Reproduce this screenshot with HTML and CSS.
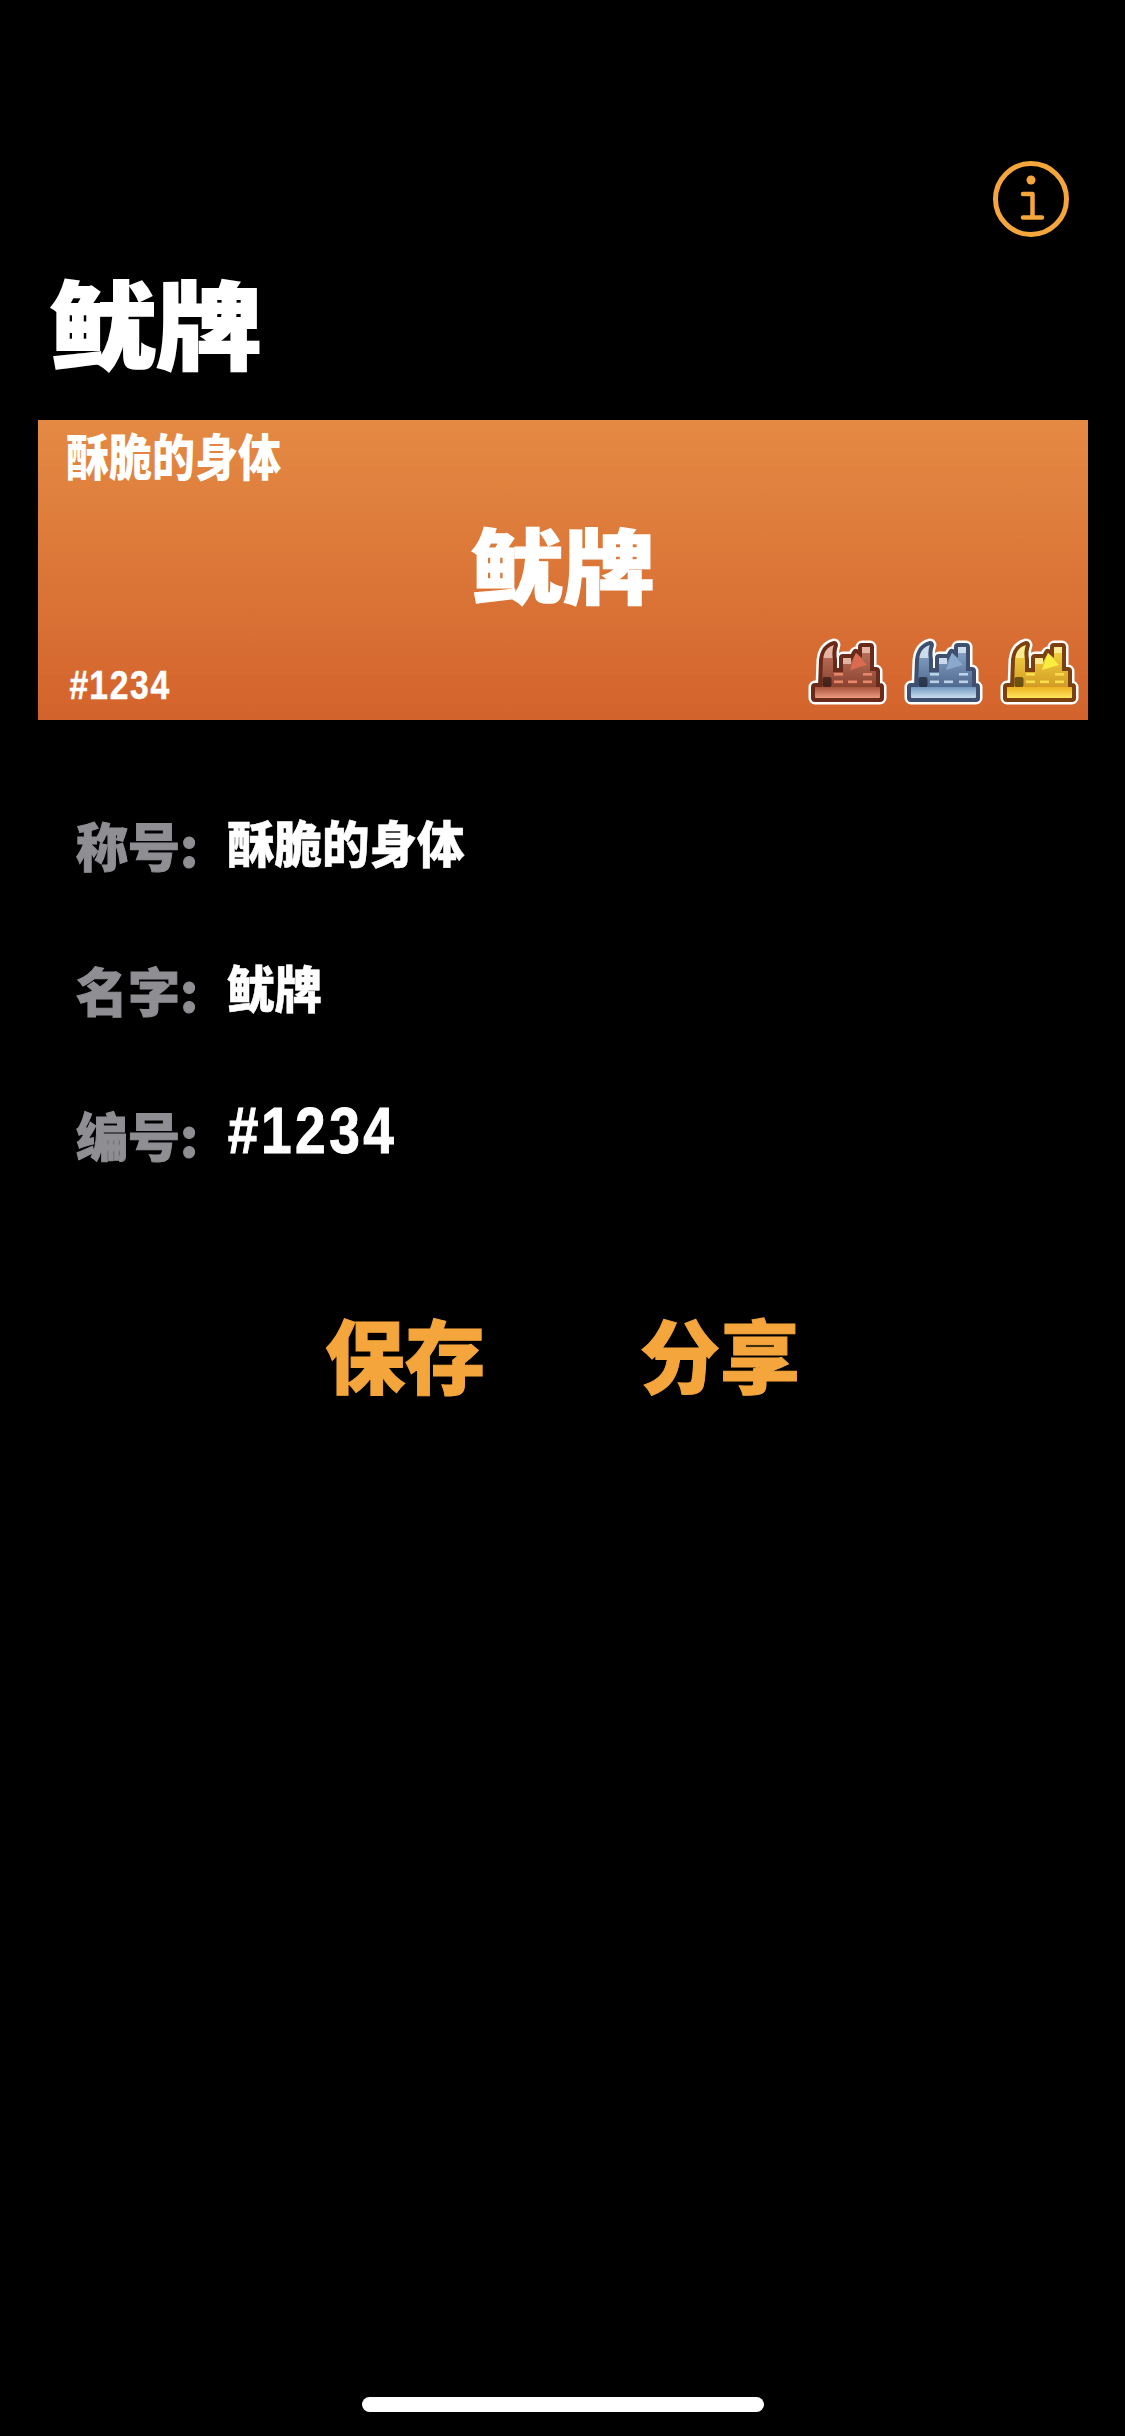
FILE: index.html
```html
<!DOCTYPE html>
<html lang="zh-CN">
<head>
<meta charset="utf-8">
<title>鱿牌</title>
<link rel="stylesheet" href="styles.css">
</head>
<body>
<svg class="defs" width="0" height="0" aria-hidden="true">
  <defs>
    <linearGradient id="bronzeBase" x1="0" y1="0" x2="0" y2="1"><stop offset="0" stop-color="#a9543c"/><stop offset="1" stop-color="#ea9a80"/></linearGradient>
    <linearGradient id="silverBase" x1="0" y1="0" x2="0" y2="1"><stop offset="0" stop-color="#7398bf"/><stop offset="1" stop-color="#c9deef"/></linearGradient>
    <linearGradient id="goldBase" x1="0" y1="0" x2="0" y2="1"><stop offset="0" stop-color="#eeb021"/><stop offset="1" stop-color="#fde65c"/></linearGradient>
    <linearGradient id="bronzeBody" x1="0" y1="0" x2="0" y2="1"><stop offset="0" stop-color="#c27a62"/><stop offset="1" stop-color="#7c3423"/></linearGradient>
    <linearGradient id="silverBody" x1="0" y1="0" x2="0" y2="1"><stop offset="0" stop-color="#8eaccb"/><stop offset="1" stop-color="#3f5880"/></linearGradient>
    <linearGradient id="goldBody" x1="0" y1="0" x2="0" y2="1"><stop offset="0" stop-color="#f7dc45"/><stop offset="1" stop-color="#c98a1c"/></linearGradient>
    <symbol id="factory" viewBox="0 0 80 65" overflow="visible">
      <path class="f-shape f-outer" d="M8 60 V49 H15 L16 22 C17 14 20 9 27 7 C25 12 25 16 26 22 V34 H36 V20 H44 V24 L49 15 L55 20 V9 H63 V33 H69 V49 H73 V60 Z"/>
      <path class="f-shape f-inner" d="M8 60 V49 H15 L16 22 C17 14 20 9 27 7 C25 12 25 16 26 22 V34 H36 V20 H44 V24 L49 15 L55 20 V9 H63 V33 H69 V49 H73 V60 Z"/>
      <path class="f-stack" d="M16.5 20 C17 14 20 9.5 26.5 7.5 C25 12 25 16 25.5 20 Z"/>
      <rect class="f-stack" x="36" y="20" width="8" height="6"/>
      <rect class="f-stack" x="55" y="9" width="8" height="6"/>
      <path class="f-tri" d="M49 15 L60 27 L43 32 Z"/>
      <g class="f-lights">
        <rect x="27" y="35" width="9" height="2.6"/>
        <rect x="56" y="35" width="9" height="2.6"/>
        <rect x="27" y="42.5" width="9" height="2.6"/>
        <rect x="41" y="42.5" width="9" height="2.6"/>
        <rect x="56" y="42.5" width="9" height="2.6"/>
      </g>
      <rect class="f-shadow" x="15.5" y="39" width="9" height="10" rx="2"/>
      <rect class="f-base" x="8" y="49" width="65" height="11" rx="1"/>
    </symbol>
  </defs>
</svg>

<main class="screen">
  <header class="topbar">
    <svg class="info" viewBox="0 0 76 76" aria-label="信息">
      <circle cx="38" cy="38" r="35.5" fill="none" stroke="#f4a63c" stroke-width="5"/>
      <circle cx="38" cy="19" r="4.5" fill="#f4a63c"/>
      <path d="M30 33 H39.5 V56.5 M30 56.5 H49" fill="none" stroke="#f4a63c" stroke-width="4.5" stroke-linecap="round" stroke-linejoin="round"/>
    </svg>
  </header>

  <h1 class="page-title">鱿牌</h1>

  <section class="plate">
    <div class="plate-top"><span class="plate-sub">酥脆的身体</span></div>
    <div class="plate-name">鱿牌</div>
    <div class="plate-bottom">
      <span class="plate-num"><span class="hash">#</span>1234</span>
      <div class="badges">
        <svg class="badge bronze"><use href="#factory"/></svg>
        <svg class="badge silver"><use href="#factory"/></svg>
        <svg class="badge gold"><use href="#factory"/></svg>
      </div>
    </div>
  </section>

  <section class="fields">
    <div class="field"><span class="field-label">称号:</span><span class="field-value">酥脆的身体</span></div>
    <div class="field"><span class="field-label">名字:</span><span class="field-value">鱿牌</span></div>
    <div class="field"><span class="field-label">编号:</span><span class="field-value num"><span class="hash">#</span>1234</span></div>
  </section>

  <nav class="actions">
    <span class="action">保存</span>
    <span class="action">分享</span>
  </nav>

  <div class="home-indicator"></div>
</main>
</body>
</html>
```

FILE: styles.css
```css
* { box-sizing: border-box; }
html, body { margin: 0; padding: 0; background: #000; }
body { font-family: "Noto Sans CJK SC", "Noto Sans", sans-serif; font-weight: 900; color: #fff; }
.defs { display: block; height: 0; }
.screen { position: relative; width: 1125px; height: 2436px; overflow: hidden; background: #000; }
.hash { font-style: italic; }

.topbar { display: flex; justify-content: flex-end; padding: 161px 56px 0 0; }
.info { display: block; width: 76px; height: 76px; }

.page-title { margin: 29px 0 0 50px; font-size: 106px; line-height: 110px; font-weight: 900; height: 110px; -webkit-text-stroke: 2px #fff; transform: scaleY(.9); transform-origin: left center; }

.plate { margin: 44px 37px 0 38px; height: 300px; display: flex; flex-direction: column; background: linear-gradient(#e48a44, #d3632c); }
.plate-top { padding: 4px 0 0 28px; height: 87px; }
.plate-sub { display: inline-block; font-size: 50px; line-height: 60px; transform: scaleX(.86); transform-origin: left center; white-space: nowrap; }
.plate-name { text-align: center; font-size: 92px; line-height: 110px; height: 110px; -webkit-text-stroke: 1.5px #fff; transform: scaleY(.88); }
.plate-bottom { display: flex; justify-content: space-between; align-items: flex-end; padding: 0 9px 17px 31px; flex: 1; }
.plate-num { display: inline-block; margin-bottom: -3px; font-family: "Liberation Sans", sans-serif; font-weight: 700; font-size: 40px; line-height: 42px; transform: scaleX(.84); transform-origin: left center; letter-spacing: 2px; -webkit-text-stroke: .5px #fff; }
.badges { display: flex; gap: 16px; }
.badge { display: block; width: 80px; height: 65px; overflow: visible; }
.bronze { --dark: #6a2a1a; --inner: url(#bronzeBody); --base: url(#bronzeBase); --stack: #ecc0b0; --tri: #d96c4e; --lights: #e8866a; }
.silver { --dark: #3e4f70; --inner: url(#silverBody); --base: url(#silverBase); --stack: #d9e6f1; --tri: #8aa9cd; --lights: #bcd2e6; }
.gold { --dark: #7c3f10; --inner: url(#goldBody); --base: url(#goldBase); --stack: #fbf09f; --tri: #f9ee3f; --lights: #f9dc4e; }
.f-shape { stroke-linejoin: round; }
.f-outer { fill: #fff; stroke: #fff; stroke-width: 13px; }
.f-inner { fill: var(--inner); stroke: var(--dark); stroke-width: 8px; paint-order: stroke; }
.f-stack { fill: var(--stack); opacity: .85; }
.f-tri { fill: var(--tri); }
.f-lights { fill: var(--lights); }
.f-shadow { fill: #000; opacity: .5; }
.f-base { fill: var(--base); }

.fields { display: flex; flex-direction: column; gap: 93px; padding: 95px 0 0 76px; }
.field { display: flex; align-items: center; height: 52px; }
.field-label { flex: 0 0 151px; color: #8e8e93; font-size: 52px; line-height: 52px; position: relative; top: 4px; white-space: nowrap; -webkit-text-stroke: 1px #8e8e93; }
.field-value { font-size: 50px; line-height: 52px; display: inline-block; transform: scaleX(.95); transform-origin: left center; white-space: nowrap; -webkit-text-stroke: .5px #fff; }
.field-value.num { font-family: "Liberation Sans", sans-serif; font-weight: 700; font-size: 64px; letter-spacing: 4px; transform: scaleX(.86); -webkit-text-stroke: 1px #fff; }

.actions { display: flex; justify-content: center; gap: 155px; padding-top: 149px; }
.action { color: #f4a63c; font-size: 80px; line-height: 92px; -webkit-text-stroke: 1px #f4a63c; }

.home-indicator { position: absolute; left: 362px; bottom: 24px; width: 402px; height: 15px; border-radius: 8px; background: #fff; }
```
